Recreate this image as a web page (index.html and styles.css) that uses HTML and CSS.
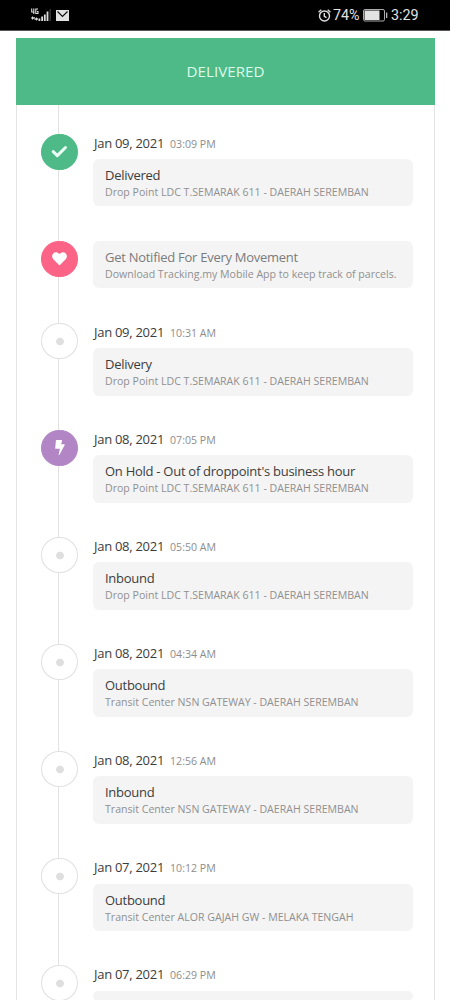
FILE: index.html
```
<!DOCTYPE html>
<html lang="en">
<head>
<meta charset="utf-8">
<meta name="viewport" content="width=device-width">
<title>Tracking</title>
<link rel="stylesheet" href="styles.css">
</head>
<body>
<header class="status">
  <div class="status-left">
    <svg width="20" height="14" viewBox="0 0 20 14" aria-hidden="true">
      <path d="M.7 .5v3.500h2.800M2.800 .5v5.500M7 1H4.800v4.500H7V3.500H6" fill="none" stroke="#ddd" stroke-width="1.100"/>
      <path d="M0 10l2-2v1.300h2v1.400H2V12zM7.200 11l-2-2v1.300H3.500v1.400h1.700V13z" fill="#ddd"/>
      <path d="M7.500 10.500h1.800V13H7.500zM10.200 8.500H12V13h-1.800zM12.900 6.500h1.800V13h-1.800zM15.600 3.500h1.800V13h-1.800z" fill="#ddd"/>
      <path d="M18.500 1h1.200v12h-1.200z" fill="#444"/>
    </svg>
    <svg width="13" height="11" viewBox="0 0 13 11" aria-hidden="true"><path d="M0 0h13v11H0z" fill="#e2e2e2"/><path d="M1.500 1.500l5 5 5-5" fill="none" stroke="#111" stroke-width="1.200"/></svg>
  </div>
  <div class="status-right">
    <svg class="alarm" width="13" height="13" viewBox="0 0 13 13" fill="none" stroke="#ddd" stroke-width="1.400" aria-hidden="true"><circle cx="6.500" cy="7" r="5"/><path d="M6.300 4v3.300l2.200 1.400M.6 3.200L3.300.8M12.400 3.200L9.700.8"/></svg>
    <span class="percent">74%</span>
    <svg class="battery" width="25" height="13" viewBox="0 0 25 13" aria-hidden="true"><rect x=".5" y=".5" width="21" height="11.500" rx="1.500" fill="none" stroke="#aaa"/><path d="M1.500 1.500h15v9.500h-15z" fill="#e2e2e2"/><path d="M23 3.500h1.300v5.500H23z" fill="#bbb"/></svg>
    <span class="clock">3:29</span>
  </div>
</header>
<main class="panel">
  <h1 class="banner">DELIVERED</h1>
  <ol class="timeline">
    <li class="event">
      <div class="marker done"><svg width="36" height="36" viewBox="0 0 36 36"><path d="M12.200 17.600l4.100 4 8.200-8.100" fill="none" stroke="#ecfff6" stroke-width="3" stroke-linecap="round" stroke-linejoin="round"/></svg></div>
      <div class="body"><div class="when"><span class="date">Jan 09, 2021</span><span class="time">03:09 PM</span></div>
      <div class="card"><div class="title">Delivered</div><div class="place">Drop Point LDC T.SEMARAK 611 - DAERAH SEREMBAN</div></div></div>
    </li>
    <li class="event promo">
      <div class="marker heart"><svg width="36" height="36" viewBox="0 0 36 36"><path d="M18.500 24.500l-6.200-6.200c-3-3.500.2-7.800 3.800-6.900 1 .3 1.900.9 2.400 1.700.5-.8 1.400-1.400 2.400-1.700 3.600-.9 6.800 3.400 3.800 6.900z" fill="#fff"/></svg></div>
      <div class="body"><div class="card"><div class="title">Get Notified For Every Movement</div><div class="place">Download Tracking.my Mobile App to keep track of parcels.</div></div></div>
    </li>
    <li class="event">
      <div class="marker"></div>
      <div class="body"><div class="when"><span class="date">Jan 09, 2021</span><span class="time">10:31 AM</span></div>
      <div class="card"><div class="title">Delivery</div><div class="place">Drop Point LDC T.SEMARAK 611 - DAERAH SEREMBAN</div></div></div>
    </li>
    <li class="event">
      <div class="marker hold"><svg width="36" height="36" viewBox="0 0 36 36"><path d="M15.300 10h5.300q.6 0 .5.600l-.9 3.700h3.100q.7 0 .4.700l-5.200 9.700q-.8 1-.8-.2l1.200-5.700h-4.100q-.7 0-.6-.600l.7-7.700q0-.5.400-.5z" fill="#fff"/></svg></div>
      <div class="body"><div class="when"><span class="date">Jan 08, 2021</span><span class="time">07:05 PM</span></div>
      <div class="card"><div class="title">On Hold - Out of droppoint's business hour</div><div class="place">Drop Point LDC T.SEMARAK 611 - DAERAH SEREMBAN</div></div></div>
    </li>
    <li class="event">
      <div class="marker"></div>
      <div class="body"><div class="when"><span class="date">Jan 08, 2021</span><span class="time">05:50 AM</span></div>
      <div class="card"><div class="title">Inbound</div><div class="place">Drop Point LDC T.SEMARAK 611 - DAERAH SEREMBAN</div></div></div>
    </li>
    <li class="event">
      <div class="marker"></div>
      <div class="body"><div class="when"><span class="date">Jan 08, 2021</span><span class="time">04:34 AM</span></div>
      <div class="card"><div class="title">Outbound</div><div class="place">Transit Center NSN GATEWAY - DAERAH SEREMBAN</div></div></div>
    </li>
    <li class="event">
      <div class="marker"></div>
      <div class="body"><div class="when"><span class="date">Jan 08, 2021</span><span class="time">12:56 AM</span></div>
      <div class="card"><div class="title">Inbound</div><div class="place">Transit Center NSN GATEWAY - DAERAH SEREMBAN</div></div></div>
    </li>
    <li class="event">
      <div class="marker"></div>
      <div class="body"><div class="when"><span class="date">Jan 07, 2021</span><span class="time">10:12 PM</span></div>
      <div class="card"><div class="title">Outbound</div><div class="place">Transit Center ALOR GAJAH GW - MELAKA TENGAH</div></div></div>
    </li>
    <li class="event last">
      <div class="marker"></div>
      <div class="body"><div class="when"><span class="date">Jan 07, 2021</span><span class="time">06:29 PM</span></div>
      <div class="card"></div></div>
    </li>
  </ol>
</main>
</body>
</html>
```
FILE: styles.css
```
* { box-sizing: border-box; }
body {
  margin: 0;
  height: 1000px;
  overflow: hidden;
  background: #fff;
  color: #3c3c3c;
  font-family: "Open Sans", "Noto Sans", sans-serif;
}
.status {
  height: 31px;
  padding: 0 31px;
  display: flex;
  justify-content: space-between;
  align-items: center;
  background: #000;
  border-bottom: 1px solid #555;
  color: #e2e2e2;
  font-family: Roboto, sans-serif;
  font-size: 14.300px;
}
.status-left, .status-right { display: flex; align-items: center; }
.status-left { gap: 5px; }
.alarm { margin-right: 2px; }
.percent { width: 30px; white-space: nowrap; }
.clock { width: 28px; white-space: nowrap; }
.battery { margin-right: 3px; }
.panel {
  margin: 7px 15px 0 16px;
  height: 962px;
  overflow: hidden;
  border: 1px solid #e4e4e4;
  border-width: 0 1px;
}
.banner {
  margin: 0 -1px;
  height: 67px;
  line-height: 67px;
  background: #4dba87;
  color: #dcfaeb;
  font-size: 15.200px;
  font-weight: 400;
  text-align: center;
}
.panel { overflow: visible; }
.timeline {
  height: 895px;
  overflow: hidden;
  margin: 0;
  padding: 28.500px 21px 0 24px;
  list-style: none;
  background: linear-gradient(#e2e2e2, #e2e2e2) 41px 0 / 1px 100% no-repeat;
}
.event {
  display: grid;
  grid-template-columns: 36.500px 1fr;
  column-gap: 15.500px;
  height: 107.100px;
}
.promo { height: 82.300px; }
.marker {
  display: flex;
  align-items: center;
  justify-content: center;
  height: 36px;
  border: 1px solid #e0e0e0;
  border-radius: 50%;
  background: radial-gradient(circle at 18px 17.500px, #dfdfdf 3.500px, #fff 4.200px);
}
.marker svg { flex: none; display: block; }
.done { background: #4dba87; border-color: #4dba87; }
.heart { background: #fb6486; border-color: #fb6486; }
.hold { background: #b286c5; border-color: #b286c5; }
.when {
  display: flex;
  align-items: baseline;
  gap: 6px;
  height: 25.200px;
  padding-left: 1px;
  line-height: 19px;
  white-space: nowrap;
}
.date { font-size: 13px; letter-spacing: -0.280px; }
.time { font-size: 10.580px; color: #8d8d8d; }
.card {
  height: 47.500px;
  padding: 7px 0 0 12px;
  border-radius: 6px;
  background: #f4f4f4;
  white-space: nowrap;
}
.last, .last .card { height: auto; }
.last .card { min-height: 10px; }
.title { font-size: 13px; line-height: 18px; letter-spacing: -0.270px; }
.place { font-size: 10.580px; line-height: 16px; color: #909090; }
.promo .title { color: #7b7b7b; }
```
